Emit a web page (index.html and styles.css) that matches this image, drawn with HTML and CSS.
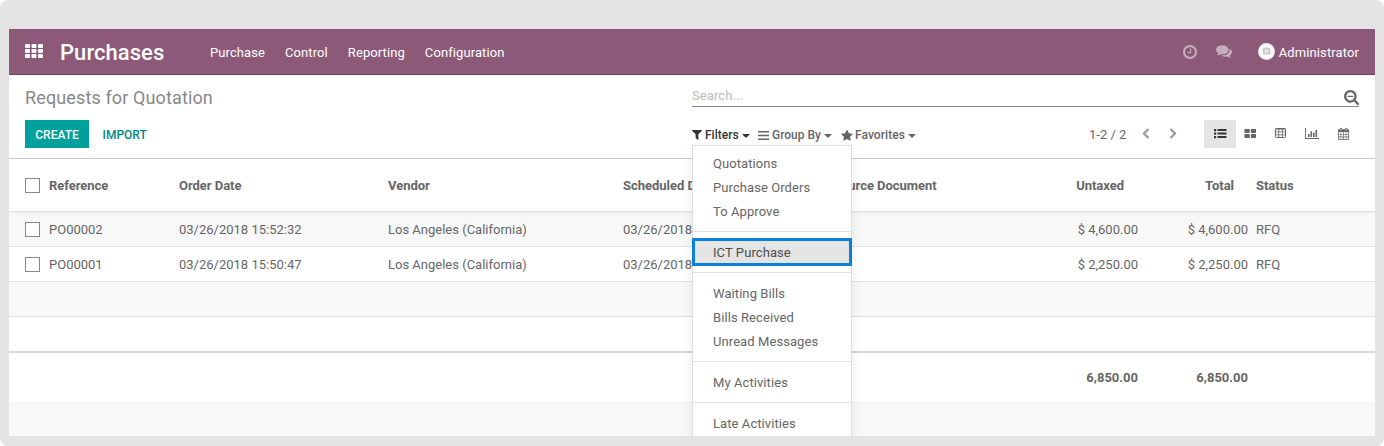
FILE: index.html
```html
<!DOCTYPE html>
<html lang="en">
<head>
<meta charset="utf-8">
<title>Requests for Quotation</title>
<link rel="stylesheet" href="styles.css">
</head>
<body>
<div class="frame">
<div class="window">
  <header class="navbar">
    <svg class="apps" viewBox="0 0 18 14"><path d="M0 1q0-1 1-1h3q1 0 1 1v2q0 1-1 1h-3q-1 0-1-1zM6.500 1q0-1 1-1h3q1 0 1 1v2q0 1-1 1h-3q-1 0-1-1zM13 1q0-1 1-1h3q1 0 1 1v2q0 1-1 1h-3q-1 0-1-1zM0 6q0-1 1-1h3q1 0 1 1v2q0 1-1 1h-3q-1 0-1-1zM6.500 6q0-1 1-1h3q1 0 1 1v2q0 1-1 1h-3q-1 0-1-1zM13 6q0-1 1-1h3q1 0 1 1v2q0 1-1 1h-3q-1 0-1-1zM0 11q0-1 1-1h3q1 0 1 1v2q0 1-1 1h-3q-1 0-1-1zM6.500 11q0-1 1-1h3q1 0 1 1v2q0 1-1 1h-3q-1 0-1-1zM13 11q0-1 1-1h3q1 0 1 1v2q0 1-1 1h-3q-1 0-1-1z"/></svg>
    <span class="brand">Purchases</span>
    <nav class="menu"><span>Purchase</span><span>Control</span><span>Reporting</span><span>Configuration</span></nav>
    <div class="systray">
      <svg class="clock" viewBox="128 128 1536 1536"><path d="M1024 544v448q0 14-9 23t-23 9h-320q-14 0-23-9t-9-23v-64q0-14 9-23t23-9h224v-352q0-14 9-23t23-9h64q14 0 23 9t9 23zm416 352q0-148-73-273t-198-198-273-73-273 73-198 198-73 273 73 273 198 198 273 73 273-73 198-198 73-273zm224 0q0 209-103 385.500t-279.500 279.500-385.500 103-385.500-103-279.500-279.500-103-385.500 103-385.500 279.500-279.500 385.500-103 385.500 103 279.500 279.500 103 385.500z"/></svg>
      <svg class="chat" viewBox="0 256 1792 1408"><path d="M1408 768q0 139-94 257t-256.500 186.500-353.500 68.500q-86 0-176-16-124 88-278 128-36 9-86 16h-3q-11 0-20.500-8t-11.500-21q-1-3-1-6.500t.5-6.500 2-6l2.500-5 3.500-5.500 4-5 4.500-5 4-4.500q5-6 23-25t26-29.500 22.500-29 25-38.500 20.500-44q-124-72-195-177t-71-224q0-139 94-257t256.500-186.500 353.500-68.500 353.500 68.500 256.500 186.500 94 257zm384 256q0 120-71 224.500t-195 176.500q10 24 20.500 44t25 38.500 22.500 29 26 29.500 23 25q1 1 4 4.500t4.500 5 4 5 3.500 5.500l2.500 5 2 6 .5 6.500-1 6.500q-3 14-13 22t-22 7q-50-7-86-16-154-40-278-128-90 16-176 16-271 0-472-132 58 4 88 4 161 0 309-45t264-129q125-92 192-212t67-254q0-77-23-152 129 71 204 178t75 230z"/></svg>
      <svg class="avatar" viewBox="0 0 17 17"><circle cx="8.500" cy="8.500" r="8.500" fill="#eeebed"/><circle cx="8.500" cy="8.500" r="7" fill="#fff"/><path d="M4.700 5.300h1.800l.6-.8h2.800l.6.800h1.800v6.200H4.700z" fill="#c8c8c8"/><circle cx="8.600" cy="8.400" r="1.900" fill="#fff"/><circle cx="8.600" cy="8.400" r="1" fill="#c8c8c8"/></svg>
      <span class="user">Administrator</span>
    </div>
  </header>

  <section class="control">
    <div class="left">
      <h1 class="title">Requests for Quotation</h1>
      <div class="actions"><button class="create">CREATE</button><button class="import">IMPORT</button></div>
    </div>
    <div class="right">
      <div class="search"><span class="placeholder">Search...</span>
        <svg class="glass" viewBox="64 128 1664 1664"><path d="M1088 800v64q0 13-9.500 22.500t-22.500 9.500h-576q-13 0-22.500-9.500t-9.500-22.500v-64q0-13 9.500-22.500t22.500-9.500h576q13 0 22.500 9.500t9.500 22.500zm128 32q0-185-131.500-316.500t-316.500-131.500-316.500 131.500-131.500 316.500 131.500 316.500 316.500 131.500 316.500-131.500 131.500-316.500zm512 832q0 53-37.500 90.500t-90.500 37.500q-54 0-90-38l-343-342q-179 124-399 124-143 0-273.500-55.500t-225-150-150-225-55.500-273.500 55.500-273.500 150-225 225-150 273.500-55.500 273.500 55.500 225 150 150 225 55.500 273.500q0 220-124 399l343 343q37 37 37 90z"/></svg>
      </div>
      <div class="tools">
        <div class="option filters">
          <svg class="i-filter" viewBox="192 256 1408 1408"><path d="M1595 295q17 41-14 70l-493 493v742q0 42-39 59-13 5-25 5-27 0-45-19l-256-256q-19-19-19-45v-486l-493-493q-31-29-14-70 17-39 59-39h1280q42 0 59 39z"/></svg><span class="label">Filters</span><i class="caret"></i>
          <div class="dropdown">
            <div class="item">Quotations</div><div class="item">Purchase Orders</div><div class="item">To Approve</div>
            <div class="divider"></div>
            <div class="item selected"><span>ICT Purchase</span></div>
            <div class="divider"></div>
            <div class="item">Waiting Bills</div><div class="item">Bills Received</div><div class="item">Unread Messages</div>
            <div class="divider"></div>
            <div class="item">My Activities</div>
            <div class="divider"></div>
            <div class="item">Late Activities</div>
          </div>
        </div>
        <div class="option group">
          <svg class="i-bars" viewBox="0 0 11 9"><path d="M0 0h11v1.500H0zM0 3.700h11v1.500H0zM0 7.500h11V9H0z"/></svg><span class="label">Group By</span><i class="caret"></i>
        </div>
        <div class="option favorites">
          <svg class="i-star" viewBox="64 59 1664 1587"><path d="M1728 647q0 22-26 48l-363 354 86 500q1 7 1 20 0 21-10.500 35.500t-30.500 14.500q-19 0-40-12l-449-236-449 236q-22 12-40 12-21 0-31.500-14.500t-10.500-35.500q0-6 2-20l86-500-364-354q-25-27-25-48 0-37 56-46l502-73 225-455q19-41 49-41t49 41l225 455 502 73q56 9 56 46z"/></svg><span class="label">Favorites</span><i class="caret"></i>
        </div>
        <div class="pager"><span class="count">1-2 / 2</span>
          <svg class="chev" viewBox="0 0 8 11"><path d="M6.500 1L2 5.500 6.500 10"/></svg>
          <svg class="chev" viewBox="0 0 8 11"><path d="M1.500 1L6 5.500 1.500 10"/></svg>
        </div>
        <div class="views">
          <span class="view active"><svg width="13" height="10" viewBox="0 0 13 10"><path d="M0 0h2.200v2.200H0zM0 3.500h2.200v2.200H0zM0 7h2.200v2.200H0zM3.500.1h9v1.900h-9zM3.500 3.600h9v1.900h-9zM3.500 7.100h9v1.900h-9z"/></svg></span>
          <span class="view tiles"><svg width="12" height="10" viewBox="-.3 0 12 10"><path d="M.8 0h4q.7 0 .7.700v2.600q0 .7-.7.700h-4q-.7 0-.7-.7v-2.600q0-.7.700-.7zM7.200 0h4q.7 0 .7.700v2.600q0 .7-.7.700h-4q-.7 0-.7-.7v-2.600q0-.7.700-.7zM.8 5h4q.7 0 .7.700v2.600q0 .7-.7.700h-4q-.7 0-.7-.7v-2.600q0-.7.700-.7zM7.200 5h4q.7 0 .7.700v2.600q0 .7-.7.700h-4q-.7 0-.7-.7v-2.600q0-.7.700-.7z"/></svg></span>
          <span class="view pivot"><svg width="12" height="11" viewBox="0 0 12 11"><rect x=".5" y=".5" width="10" height="9" rx=".8" class="line"/><path d="M.5.500h10v1H.5zM.5 3.500h10v.8H.5zM.5 6.400h10v.8H.5zM3.400 1h.8v8.500h-.8zM6.900 1h.8v8.500h-.8z"/></svg></span>
          <span class="view graph"><svg width="14" height="11" viewBox="0 0 14 11"><path d="M0 0h.9v10H14v.9H0zM3 6h1.600v3H3zM5.500 3.200h1.600V9H5.500zM8 4.800h1.600V9H8zM10.500 2h1.600v7h-1.600z"/></svg></span>
          <span class="view calendar"><svg width="12" height="13" viewBox="0 0 12 13"><path d="M2.100 0h1.900v1.200h3.200V0h1.900v1.200h1.200q.8 0 .8.800v9.300q0 .8-.8.800H.8q-.8 0-.8-.8V2q0-.8.800-.8h1.300z"/><path class="cells" d="M.8 4h1.900v2H.8zM3.300 4h1.900v2H3.300zM5.900 4h1.900v2H5.900zM8.400 4h1.900v2H8.400zM.8 6.600h1.900v2H.8zM3.300 6.600h1.900v2H3.300zM5.900 6.600h1.900v2H5.900zM8.400 6.600h1.900v2H8.400zM.8 9.200h1.900v2H.8zM3.300 9.200h1.900v2H3.300zM5.900 9.200h1.900v2H5.900zM8.400 9.200h1.900v2H8.400zM2.700.700h.7v1.800h-.7zM7.800.700h.7v1.800h-.7z"/></svg></span>
        </div>
      </div>
    </div>
  </section>

  <main class="list">
    <div class="row head"><i class="check"></i><span>Reference</span><span>Order Date</span><span>Vendor</span><span>Scheduled Date</span><span>Source Document</span><span class="num">Untaxed</span><span class="num">Total</span><span class="status">Status</span></div>
    <div class="row odd first"><i class="check"></i><span>PO00002</span><span>03/26/2018 15:52:32</span><span>Los Angeles (California)</span><span>03/26/2018</span><span></span><span class="num">$ 4,600.00</span><span class="num">$ 4,600.00</span><span class="status">RFQ</span></div>
    <div class="row"><i class="check"></i><span>PO00001</span><span>03/26/2018 15:50:47</span><span>Los Angeles (California)</span><span>03/26/2018</span><span></span><span class="num">$ 2,250.00</span><span class="num">$ 2,250.00</span><span class="status">RFQ</span></div>
    <div class="row odd"></div>
    <div class="row blank"></div>
    <div class="row foot"><i></i><span></span><span></span><span></span><span></span><span></span><span class="num">6,850.00</span><span class="num">6,850.00</span><span></span></div>
    <div class="filler"></div>
  </main>
</div>
</div>
</body>
</html>
```
FILE: styles.css
```css
* { box-sizing: border-box; }
body { margin: 0; background: #fff; font-family: Roboto, sans-serif; font-size: 13px; color: #666; }
svg { display: block; flex: none; fill: currentColor; }
.frame { height: 446px; padding: 29px 9px 10px; background: #e4e4e4; border-radius: 8px; }
.window { height: 407px; background: #fff; overflow: hidden; }

.navbar { display: flex; align-items: center; height: 46px; padding: 0 16px; background: #8c5a78; border-bottom: 1px solid #68465f; color: #fff; }
.apps { width: 18px; height: 14px; margin-top: -1px; }
.brand { width: 150px; margin-left: 17px; padding-top: 2px; font-size: 22px; font-weight: 500; line-height: 45px; letter-spacing: .05px; }
.menu { display: flex; gap: 20px; padding-top: 2px; line-height: 45px; letter-spacing: .09px; }
.systray { display: flex; align-items: center; margin-left: auto; height: 45px; }
.clock { width: 14px; height: 14px; margin-right: 19px; opacity: .5; }
.chat { width: 16px; height: 13px; margin-right: 26px; opacity: .5; }
.avatar { width: 17px; height: 17px; margin-right: 4px; }
.user { padding-top: 2px; line-height: 45px; letter-spacing: .11px; }

.control { display: flex; height: 84px; padding: 0 16px; border-bottom: 1px solid #ccc; }
.left { width: 667px; }
.title { margin: 9px 0 0; font-size: 18px; font-weight: 400; line-height: 28px; letter-spacing: .13px; color: #888; }
.actions { display: flex; margin-top: 8px; }
.create, .import { height: 28px; padding: 2px 0 0; border: 0; font: 500 12px Roboto, sans-serif; }
.create { width: 64px; background: #00a09d; color: #fff; }
.import { margin-left: 13.5px; background: none; color: #008784; }
.right { width: 667px; }
.search { display: flex; justify-content: space-between; height: 32px; padding-top: 14px; border-bottom: 1px solid #888; }
.placeholder { line-height: 14px; letter-spacing: .1px; color: #bbb; }
.glass { width: 15px; height: 15px; margin-top: 1px; }
.tools { display: flex; height: 52px; }
.option { position: relative; display: flex; align-items: center; height: 40px; margin-top: 8px; font-weight: 500; font-size: 12px; }
.filters { width: 66px; color: #333; }
.group { width: 83px; }
.favorites { width: 75px; }
.i-filter { width: 10px; height: 10px; margin-right: 3px; }
.i-bars { width: 11px; height: 9px; margin-right: 3px; }
.i-star { width: 12px; height: 11px; margin-right: 2px; }
.caret { margin: 2px 8px 0 auto; border: 4px solid transparent; border-top-color: currentColor; border-bottom: 0; }
.group .caret { margin-right: 9px; }
.favorites .caret { margin-right: 0; }
.favorites .label { letter-spacing: .06px; }
.pager { display: flex; align-items: center; height: 39px; margin: 8px 0 0 173px; }
.count { width: 53px; }
.chev { width: 8px; height: 11px; margin-right: 19px; margin-top: -2px; fill: none; stroke: #999; stroke-width: 2.200; }
.views { display: flex; margin: 13px 0 0 8px; }
.view { width: 31px; height: 28px; padding-top: 8px; }
.active { width: 32px; padding: 9px 0 0 10px; background: #e4e4e4; color: #333; }
.tiles { width: 29px; padding: 9px 0 0 8px; }
.pivot { padding-left: 10px; }
.graph { padding-left: 9px; }
.calendar { padding-left: 11px; }
.line { fill: none; stroke: currentColor; }
.cells { fill: #fff; }

.dropdown { position: absolute; top: 30px; left: 0; z-index: 2; width: 160px; height: 310px; padding-top: 5px; background: #fff; border: 1px solid #e0e0e0; box-shadow: 0 6px 12px rgba(0,0,0,.08); font-size: 13px; font-weight: 400; letter-spacing: .08px; color: #666; }
.item { height: 24px; padding-left: 20px; line-height: 26px; }
.divider { height: 1px; margin: 8px 0; background: #e0e0e0; }
.selected { position: relative; background: #e4e4e4; color: #4c4c4c; }
.selected::after { content: ""; position: absolute; inset: -2px -1px; border: 3px solid #0a7fdc; }

.row { display: grid; grid-template-columns: 24px 130px 209px 235px 210px 179px 126px 110px 1fr; align-items: center; height: 35px; padding: 0 16px; border-bottom: 1px solid #e0e0e0; white-space: nowrap; }
.head { height: 53px; font-weight: 700; letter-spacing: -.03px; }
.odd { background: #f8f8f8; }
.first { background: linear-gradient(#f2f2f2, #f8f8f8 5px); }
.blank { height: 36px; border-bottom: 2px solid #d6d6d6; }
.foot { height: 48px; border: 0; font-weight: 700; }
.check { width: 15px; height: 15px; background: #fff; border: 1px solid #888; }
.num { text-align: right; }
.head .num { padding-right: 14px; }
.status { padding-left: 8px; }
.filler { height: 35px; background: #f8f8f8; }
```
